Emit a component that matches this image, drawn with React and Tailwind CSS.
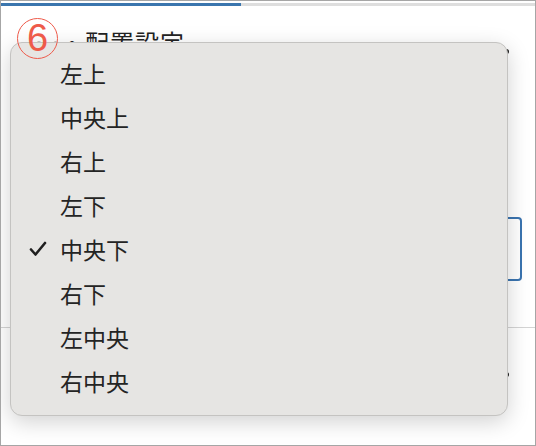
import React from 'react';

const options = ['左上', '中央上', '右上', '左下', '中央下', '右下', '左中央', '右中央'];

const CheckIcon = () => (
  <svg width="18" height="16" viewBox="0 0 18 16" fill="none">
    <path d="M2 8.5L6.5 13.5L16 2" stroke="#1f1f1f" strokeWidth="2.6" strokeLinecap="round" strokeLinejoin="round" />
  </svg>
);

export default function App() {
  const selected = '中央下';

  return (
    <div
      className="relative w-[536px] h-[446px] bg-white border border-[#a6a6a6] overflow-hidden"
      style={{ fontFamily: '"Noto Sans CJK JP", "Noto Sans", sans-serif' }}
    >
      {/* progress */}
      <div className="flex h-[3px] mt-[2px]">
        <div className="w-[240px] bg-[#3b76ae]" />
        <div className="flex-1 bg-[#dedede]" />
      </div>

      {/* page behind the menu */}
      <div className="flex flex-col">
        <div className="flex items-center justify-between pl-[34px] pr-[26px] pt-[24px]">
          <div className="text-[24px] leading-none text-[#222] tracking-[1px]">ー・配置設定</div>
          <div className="w-[5px] h-[5px] rounded-full bg-[#222] mt-[18px]" />
        </div>
        <div className="ml-[30px] mr-[13px] mt-[163px] h-[64px] border-[2.5px] border-[#3a74b0] rounded-[4px]" />
        <div className="mt-[46px] h-[1px] bg-[#d4d4d4]" />
        <div className="flex justify-end pr-[26px] pt-[44px]">
          <div className="w-[5px] h-[5px] rounded-full bg-[#222]" />
        </div>
      </div>

      {/* popup menu */}
      <div className="absolute z-20 left-[9px] top-[41px] w-[498px] rounded-[12px] bg-[#e6e5e3] border border-[#c4c3c1] shadow-[0_6px_22px_rgba(0,0,0,0.18)] pt-[8px] pb-[12px]">
        {options.map((opt) => (
          <div key={opt} className="flex items-center h-[44px]">
            <div className="w-[49px] flex justify-end pr-[13px]">
              {opt === selected && <CheckIcon />}
            </div>
            <span className="text-[23px] leading-none text-[#242424]">{opt}</span>
          </div>
        ))}
      </div>

      {/* step annotation */}
      <div className="absolute z-30 left-[16px] top-[17px] w-[41px] h-[41px] rounded-full border-[1.5px] border-[#ee5a4a] flex items-center justify-center text-[#ee5a4a] text-[38px] leading-none font-['Liberation_Sans',sans-serif]">
        <span className="-mt-[1px]">6</span>
      </div>
    </div>
  );
}
